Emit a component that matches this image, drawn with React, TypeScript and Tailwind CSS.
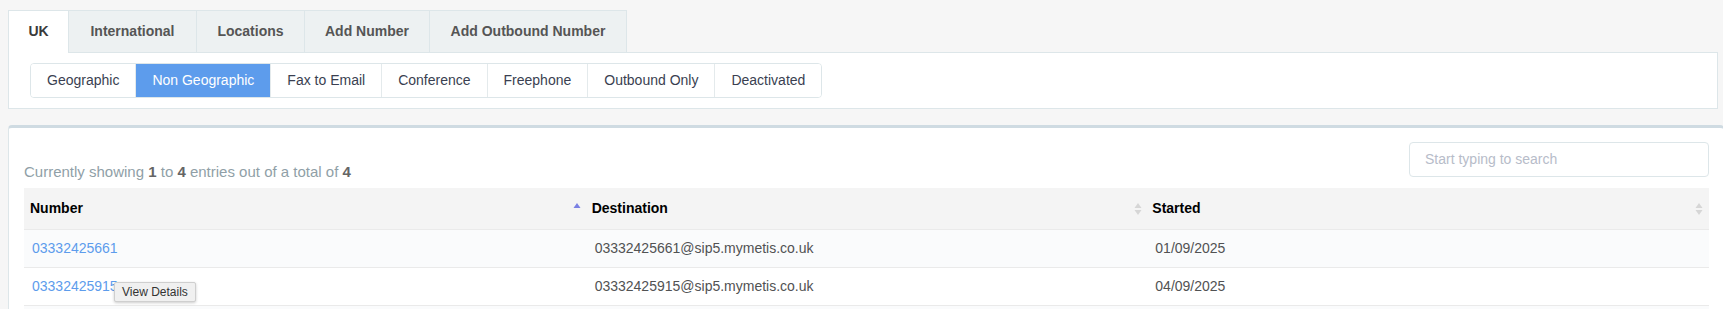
import React from "react";

const tabs = [
  { t: "UK", w: "w-[61px]" },
  { t: "International", w: "w-[128px]" },
  { t: "Locations", w: "w-[108px]" },
  { t: "Add Number", w: "w-[125px]" },
  { t: "Add Outbound Number", w: "w-[197px]" },
];
const pills = ["Geographic", "Non Geographic", "Fax to Email", "Conference", "Freephone", "Outbound Only", "Deactivated"];

function SortBoth() {
  return (
    <svg width="8" height="14" viewBox="0 0 8 14" className="shrink-0">
      <path d="M4 1 L7.5 6 L0.5 6 Z" fill="#d6d6d6" />
      <path d="M4 13 L7.5 8 L0.5 8 Z" fill="#d6d6d6" />
    </svg>
  );
}

function SortAsc() {
  return (
    <svg width="8" height="14" viewBox="0 0 8 14" className="shrink-0">
      <path d="M4 1 L7.5 6 L0.5 6 Z" fill="#7a80e3" />
    </svg>
  );
}

const rows = [
  { n: "03332425661", d: "03332425661@sip5.mymetis.co.uk", s: "01/09/2025" },
  { n: "03332425915", d: "03332425915@sip5.mymetis.co.uk", s: "04/09/2025" },
];

export default function App() {
  return (
    <div
      className="w-[1723px] h-[309px] overflow-hidden bg-[#f6f6f6] pt-[10px] pl-[8px]"
      style={{ fontFamily: '"Liberation Sans", Arial, Helvetica, sans-serif' }}
    >
      {/* Tabs */}
      <div className="flex h-[42px]">
        {tabs.map((tab, i) => (
          <div
            key={tab.t}
            className={
              "flex items-center justify-center text-[14px] font-bold border-t border-r border-[#dde6e9] " +
              tab.w +
              " " +
              (i === 0
                ? "bg-white text-[#3a3a3a] border-l -mb-px h-[43px] pb-px"
                : "bg-[#edf1f2] text-[#555]")
            }
          >
            {tab.t}
          </div>
        ))}
      </div>
      {/* Panel 1 */}
      <div className="mr-[5px] bg-white border border-[#dde6e9] px-[21px] py-[10px]">
        <div className="flex h-[35px] w-max border border-[#dde6e9] rounded-[4px] overflow-hidden">
          {pills.map((p, i) => (
            <div
              key={p}
              className={
                "flex items-center px-4 text-[14px] " +
                (i > 0 ? "border-l border-[#e4eaec] " : "") +
                (i === 1 ? "bg-[#5d9cec] text-white" : "bg-white text-[#3a3f51]")
              }
            >
              {p}
            </div>
          ))}
        </div>
      </div>
      {/* Panel 2 */}
      <div className="mt-4 -mr-px bg-white border-t-[3px] border-t-[#cfdbe2] border-x border-x-[#dde6e9] rounded-t-[4px] pl-[15px] pr-[14px] pt-[14px]">
        <div className="flex justify-between items-start">
          <div className="mt-[20px] leading-[20px] text-[15px] text-[#909fa7]">
            Currently showing <b className="text-[#656565]">1</b> to <b className="text-[#656565]">4</b> entries out of a total of{" "}
            <b className="text-[#656565]">4</b>
          </div>
          <div className="w-[300px] h-[35px] border border-[#dde6e9] rounded-[4px] flex items-center px-[15px] text-[14px] text-[#b7bcc9]">
            Start typing to search
          </div>
        </div>
        <div className="mt-[6px] text-[14px]">
          <div className="grid grid-cols-3 h-[41px] bg-[#f4f4f4] items-center text-black font-bold">
            <div className="flex items-center justify-between pl-[6px] pr-[5px]">
              <span>Number</span>
              <SortAsc />
            </div>
            <div className="flex items-center justify-between pl-[6px] pr-[5px]">
              <span>Destination</span>
              <SortBoth />
            </div>
            <div className="flex items-center justify-between pl-[5px] pr-[6px]">
              <span>Started</span>
              <SortBoth />
            </div>
          </div>
          {rows.map((r, i) => (
            <div
              key={r.n}
              className={
                "grid grid-cols-3 h-[38px] items-center border-t border-[#eaeaea] text-[#515253] " +
                (i % 2 === 0 ? "bg-[#fafbfc]" : "bg-white")
              }
            >
              <div className="pl-[8px] relative">
                <span className="text-[#5d9cec]">{r.n}</span>
                {i === 1 && (
                  <div className="absolute left-[90px] top-[6px] h-[20px] px-[7px] flex items-center text-[12px] text-[#333] bg-[#f0f0f0] border border-[#cfcfcf] rounded-[2px] shadow-[0_1px_3px_rgba(0,0,0,0.2)] whitespace-nowrap">
                    View Details
                  </div>
                )}
              </div>
              <div className="pl-[9px]">{r.d}</div>
              <div className="pl-[8px]">{r.s}</div>
            </div>
          ))}
          <div className="h-[38px] border-t border-[#eaeaea] bg-[#fafbfc]" />
        </div>
      </div>
    </div>
  );
}
